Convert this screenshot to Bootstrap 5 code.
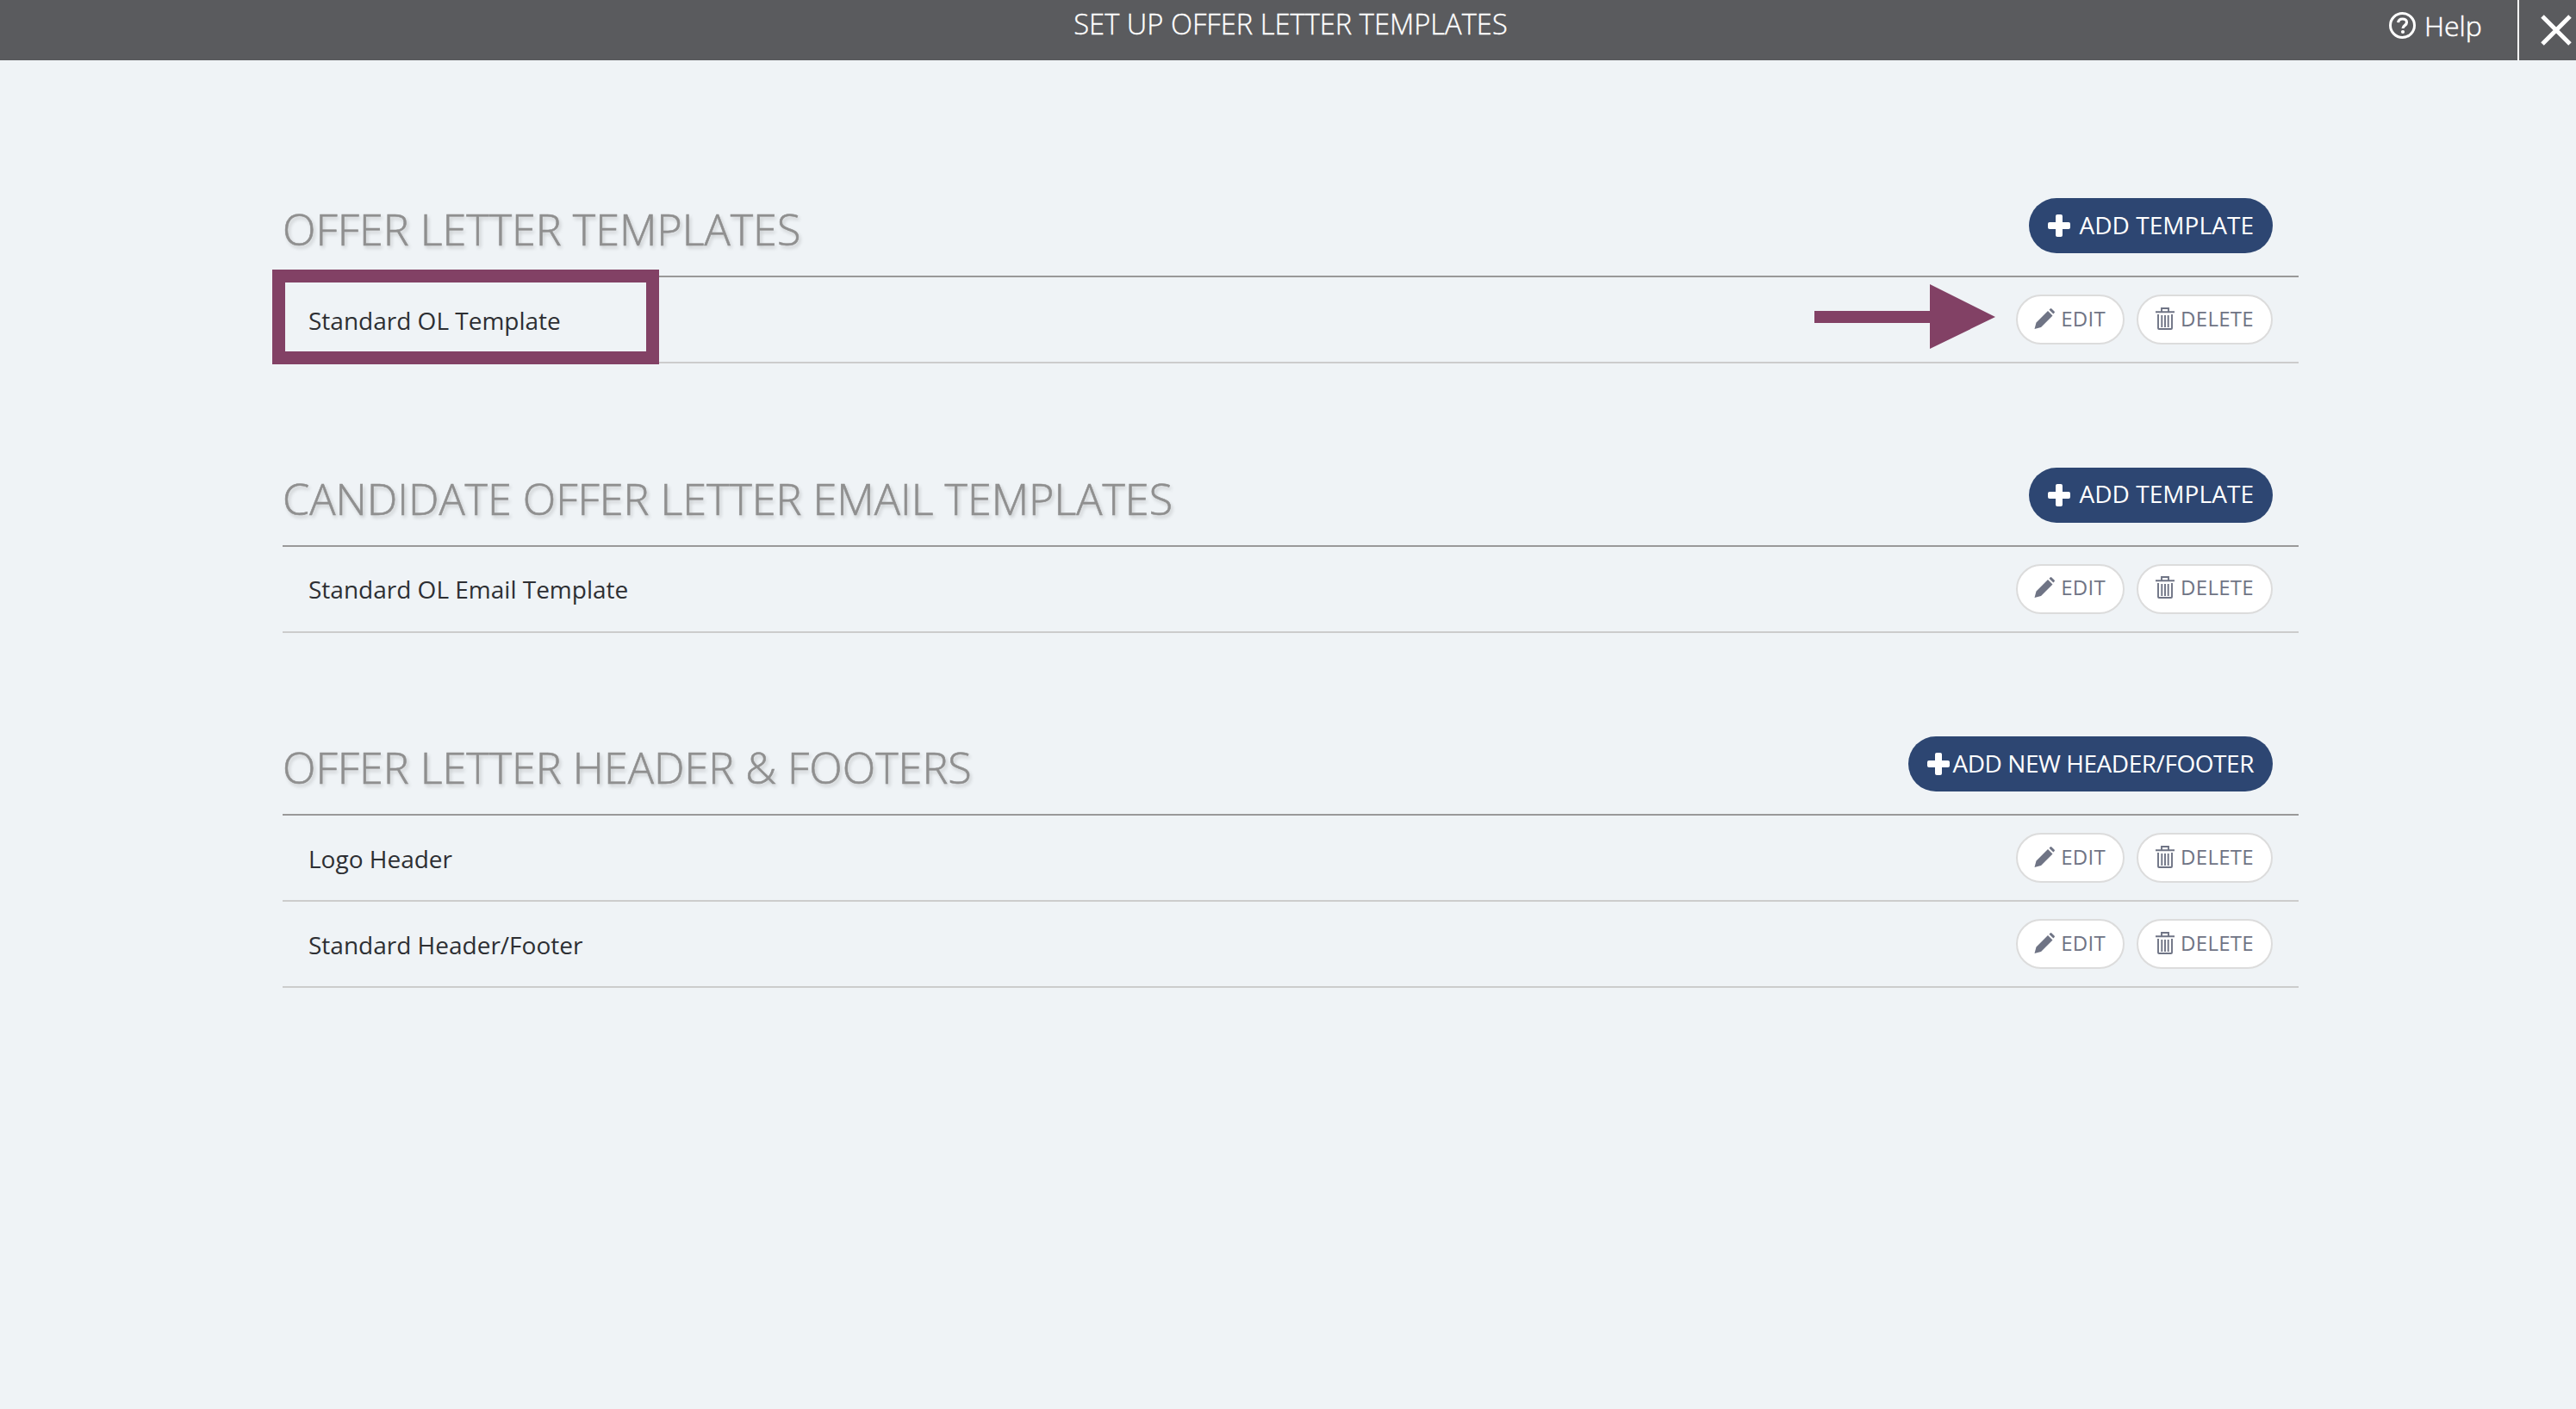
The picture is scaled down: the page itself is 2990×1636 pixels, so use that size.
<!DOCTYPE html>
<html lang="en">
<head>
<meta charset="utf-8">
<title>Set up offer letter templates</title>
<link href="https://cdn.jsdelivr.net/npm/bootstrap@5.3.0/dist/css/bootstrap.min.css" rel="stylesheet">
<style>
html,body{height:100%}
body{background:#eff3f6;font-family:"Open Sans","Liberation Sans",sans-serif;color:#2d2f33;min-height:1636px;overflow:hidden}
.top-strip{position:relative;height:70px;background:#5a5b5e;color:#fff;font-size:32px;line-height:1}
.top-title{font-weight:300;font-size:32.7px;padding-left:6px;padding-bottom:13px;-webkit-text-stroke:.35px #fff}
.top-help{left:2773px;top:0;height:70px;font-weight:300;gap:10px;padding-bottom:11px;-webkit-text-stroke:.5px #fff}
.top-close{left:2922px;top:0;width:68px;height:70px;border-left:2px solid #fff;background:transparent;padding:0}
.close-glyph{display:block;margin-left:25px}
.sheet{width:2340px;margin-left:328px;padding-top:150px}
.group-block{margin-bottom:110.5px}
.group-head{height:102px;border-bottom:2px solid #999;padding-right:30px}
.group-title{font-size:50.3px;font-weight:300;color:#8f8f8f;line-height:1;margin:0;padding-top:21px;text-shadow:2px 3px 4px rgba(0,0,0,.2);text-transform:uppercase;-webkit-text-stroke:.6px #8f8f8f}
.btn.add-pill{background:#2d4672;color:#fff;border:0;height:64px;margin-top:10px;padding:0 22px 3px;font-size:28px;line-height:1;border-radius:32px;gap:10px;letter-spacing:.05px}
.btn.add-pill svg{margin-top:3px}
.btn.add-pill.tight{gap:3px;letter-spacing:-.45px}
.item-row{height:100px;border-bottom:2px solid #ccc;padding-left:30px;padding-right:30px;position:relative;font-size:28px}
.item-name{padding-top:1px}
.action-set{gap:14px}
.btn.ghost-pill{background:#fff;color:#6f7485;border:2px solid #dcdcdc;height:58px;border-radius:29px;font-size:24px;line-height:1;padding:0 20px 3px;gap:7px;letter-spacing:.3px}
.btn.ghost-pill.edit-pill{padding-left:19px}
.mark-box{position:absolute;left:-12px;top:-9px;width:449px;height:110px;border:15px solid #824165;pointer-events:none}
.mark-arrow{position:absolute;left:1778px;top:8px;width:210px;height:75px}
</style>
</head>
<body>
<header class="top-strip d-flex align-items-center justify-content-center">
  <div class="top-title">SET UP OFFER LETTER TEMPLATES</div>
  <div class="top-help position-absolute d-flex align-items-center">
    <svg width="31" height="31" viewBox="0 0 31 31" fill="none"><circle cx="15.5" cy="15.500" r="14" stroke="#fff" stroke-width="3"/><path d="M10.600 12.200c.3-2.800 2.200-4.200 5-4.200 2.900 0 4.900 1.600 4.900 4 0 3.700-4.500 3.500-4.500 7" stroke="#fff" stroke-width="3.200"/><circle cx="16" cy="23" r="2.100" fill="#fff"/></svg>
    <span>Help</span>
  </div>
  <button class="top-close position-absolute border-top-0 border-end-0 border-bottom-0" aria-label="Close">
    <svg width="36" height="36" viewBox="0 0 36 36" class="close-glyph"><path d="M2 2 34 34M34 2 2 34" stroke="#fff" stroke-width="5"/></svg>
  </button>
</header>
<main class="sheet">
  <section class="group-block">
    <div class="group-head d-flex justify-content-between align-items-start">
      <h2 class="group-title">Offer Letter Templates</h2>
      <a class="btn add-pill d-inline-flex align-items-center"><svg width="26" height="26" viewBox="0 0 26 26" fill="#fff"><rect x="9" y="0" width="8" height="26" rx="2"/><rect x="0" y="9" width="26" height="8" rx="2"/></svg>ADD TEMPLATE</a>
    </div>
    <div class="item-row d-flex justify-content-between align-items-center">
      <span class="item-name">Standard OL Template</span>
      <div class="d-flex action-set">
        <a class="btn ghost-pill edit-pill d-inline-flex align-items-center"><svg width="24" height="24" viewBox="0 0 24 24" fill="#6f7485"><path d="M.5 24l2-7.500L16 3l5.500 5.500L8 22zM17.500 1.700l1.200-1.200a1.200 1.200 0 0 1 1.700 0l3.100 3.100a1.200 1.200 0 0 1 0 1.700l-1.200 1.200z"/></svg>EDIT</a>
        <a class="btn ghost-pill d-inline-flex align-items-center"><svg width="22" height="26" viewBox="0 0 22 26" fill="none" stroke="#6f7485" stroke-width="1.900"><path d="M0 5.300h22M7 4.500V1h8v3.500M3 8v16a1 1 0 0 0 1 1h14a1 1 0 0 0 1-1V8M7.300 9v14M11 9v14M14.700 9v14"/></svg>DELETE</a>
      </div>
      <div class="mark-box"></div>
      <svg class="mark-arrow" viewBox="0 0 210 75"><path d="M0 31h134V0l76 38-76 37V45H0z" fill="#824165"/></svg>
    </div>
  </section>
  <section class="group-block">
    <div class="group-head d-flex justify-content-between align-items-start">
      <h2 class="group-title">Candidate Offer Letter Email Templates</h2>
      <a class="btn add-pill d-inline-flex align-items-center"><svg width="26" height="26" viewBox="0 0 26 26" fill="#fff"><rect x="9" y="0" width="8" height="26" rx="2"/><rect x="0" y="9" width="26" height="8" rx="2"/></svg>ADD TEMPLATE</a>
    </div>
    <div class="item-row d-flex justify-content-between align-items-center">
      <span class="item-name">Standard OL Email Template</span>
      <div class="d-flex action-set">
        <a class="btn ghost-pill edit-pill d-inline-flex align-items-center"><svg width="24" height="24" viewBox="0 0 24 24" fill="#6f7485"><path d="M.5 24l2-7.500L16 3l5.500 5.500L8 22zM17.500 1.700l1.200-1.200a1.200 1.200 0 0 1 1.700 0l3.100 3.100a1.200 1.200 0 0 1 0 1.700l-1.200 1.200z"/></svg>EDIT</a>
        <a class="btn ghost-pill d-inline-flex align-items-center"><svg width="22" height="26" viewBox="0 0 22 26" fill="none" stroke="#6f7485" stroke-width="1.900"><path d="M0 5.300h22M7 4.500V1h8v3.500M3 8v16a1 1 0 0 0 1 1h14a1 1 0 0 0 1-1V8M7.300 9v14M11 9v14M14.700 9v14"/></svg>DELETE</a>
      </div>
    </div>
  </section>
  <section class="group-block">
    <div class="group-head d-flex justify-content-between align-items-start">
      <h2 class="group-title">Offer Letter Header &amp; Footers</h2>
      <a class="btn add-pill tight d-inline-flex align-items-center"><svg width="26" height="26" viewBox="0 0 26 26" fill="#fff"><rect x="9" y="0" width="8" height="26" rx="2"/><rect x="0" y="9" width="26" height="8" rx="2"/></svg>ADD NEW HEADER/FOOTER</a>
    </div>
    <div class="item-row d-flex justify-content-between align-items-center">
      <span class="item-name">Logo Header</span>
      <div class="d-flex action-set">
        <a class="btn ghost-pill edit-pill d-inline-flex align-items-center"><svg width="24" height="24" viewBox="0 0 24 24" fill="#6f7485"><path d="M.5 24l2-7.500L16 3l5.500 5.500L8 22zM17.500 1.700l1.200-1.200a1.200 1.200 0 0 1 1.700 0l3.100 3.100a1.200 1.200 0 0 1 0 1.700l-1.200 1.200z"/></svg>EDIT</a>
        <a class="btn ghost-pill d-inline-flex align-items-center"><svg width="22" height="26" viewBox="0 0 22 26" fill="none" stroke="#6f7485" stroke-width="1.900"><path d="M0 5.300h22M7 4.500V1h8v3.500M3 8v16a1 1 0 0 0 1 1h14a1 1 0 0 0 1-1V8M7.300 9v14M11 9v14M14.700 9v14"/></svg>DELETE</a>
      </div>
    </div>
    <div class="item-row d-flex justify-content-between align-items-center">
      <span class="item-name">Standard Header/Footer</span>
      <div class="d-flex action-set">
        <a class="btn ghost-pill edit-pill d-inline-flex align-items-center"><svg width="24" height="24" viewBox="0 0 24 24" fill="#6f7485"><path d="M.5 24l2-7.500L16 3l5.500 5.500L8 22zM17.500 1.700l1.200-1.200a1.200 1.200 0 0 1 1.700 0l3.100 3.100a1.200 1.200 0 0 1 0 1.700l-1.200 1.200z"/></svg>EDIT</a>
        <a class="btn ghost-pill d-inline-flex align-items-center"><svg width="22" height="26" viewBox="0 0 22 26" fill="none" stroke="#6f7485" stroke-width="1.900"><path d="M0 5.300h22M7 4.500V1h8v3.500M3 8v16a1 1 0 0 0 1 1h14a1 1 0 0 0 1-1V8M7.300 9v14M11 9v14M14.700 9v14"/></svg>DELETE</a>
      </div>
    </div>
  </section>
</main>
<script src="https://cdn.jsdelivr.net/npm/bootstrap@5.3.0/dist/js/bootstrap.bundle.min.js"></script>
</body>
</html>
